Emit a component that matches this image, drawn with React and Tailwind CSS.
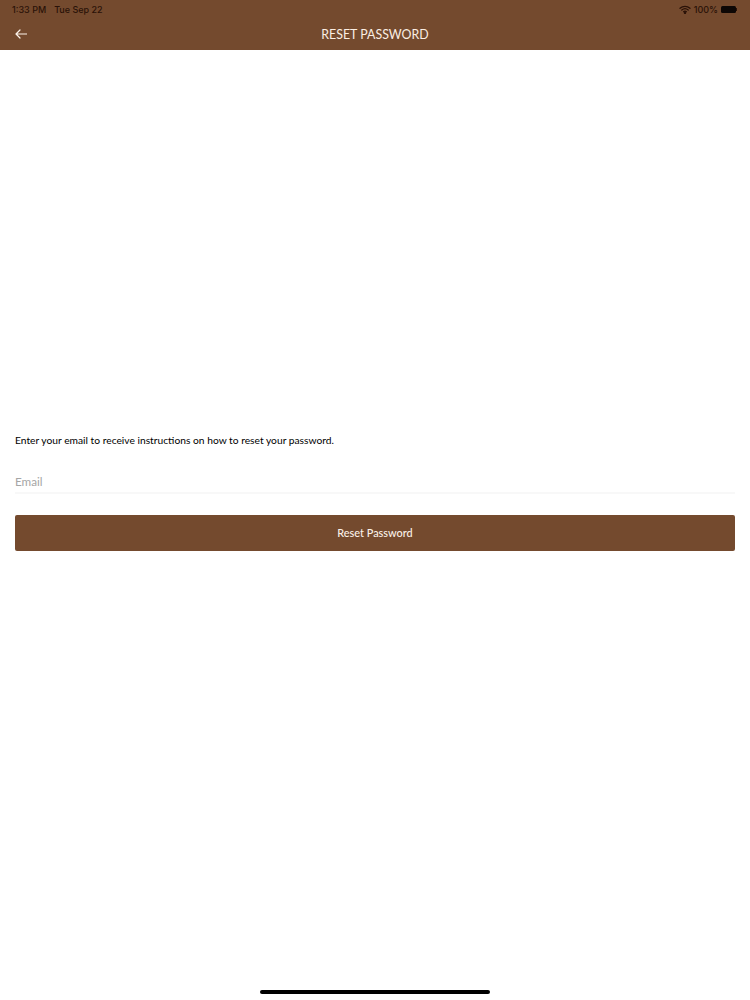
import React from "react";

function Wifi() {
  return (
    <svg width="12" height="9" viewBox="0 0 12 9" fill="none" stroke="#2a1208" strokeWidth="1.3" strokeLinecap="round">
      <path d="M1 3.2C3.8.7 8.2.7 11 3.2" />
      <path d="M2.8 5C4.6 3.5 7.4 3.5 9.2 5" />
      <path d="M4.6 6.7c.8-.6 2-.6 2.8 0" />
      <circle cx="6" cy="8" r=".5" fill="#2a1208" />
    </svg>
  );
}

function Battery() {
  return (
    <div className="flex items-center">
      <div className="w-[15px] h-[7px] bg-[#0d0705] rounded-[1.5px]" />
      <div className="w-px h-[3px] bg-[#2a1208]" />
    </div>
  );
}

export default function App() {
  return (
    <div className="relative h-[1000px] w-[750px] bg-white font-['Lato',sans-serif] flex flex-col">
      <header className="h-[50px] bg-[#744a2e] flex flex-col shrink-0">
        <div className="h-[18px] pt-[1px] flex items-center justify-between pl-3 pr-[13px] text-[9px] font-medium font-['Inter',sans-serif] text-[#2a1208]">
          <div className="flex gap-[8px]">
            <span>1:33 PM</span>
            <span>Tue Sep 22</span>
          </div>
          <div className="flex items-center gap-[3px]">
            <Wifi />
            <span>100%</span>
            <Battery />
          </div>
        </div>
        <div className="flex-1 flex items-center justify-center relative pt-[3px]">
          <svg className="absolute left-[15px] top-[11px]" width="12" height="10" viewBox="0 0 12 10" fill="none" stroke="#fdf3ea" strokeWidth="1.2" strokeLinecap="round" strokeLinejoin="round">
            <path d="M11.5 5H1M5 1 1 5l4 4" />
          </svg>
          <h1 className="text-[12.4px] text-[#fbeee3] font-normal leading-none">RESET PASSWORD</h1>
        </div>
      </header>
      <main className="flex flex-col px-[15px] pt-[384px]">
        <p className="text-[10.25px] leading-[13px] text-black">
          Enter your email to receive instructions on how to reset your password.
        </p>
        <div className="mt-[23px] h-[24px] border-b-2 border-[#f8f8f8] text-[11.7px] leading-[16px] pt-[3px] text-[#a5a5a5]">
          Email
        </div>
        <button className="mt-[21px] h-[36px] w-full bg-[#744a2e] rounded-[2px] text-[10.9px] font-medium text-[#fbf1e8] text-center">
          Reset Password
        </button>
      </main>
      <div className="absolute bottom-[6px] left-[260px] w-[230px] h-[4px] rounded-full bg-black" />
    </div>
  );
}
